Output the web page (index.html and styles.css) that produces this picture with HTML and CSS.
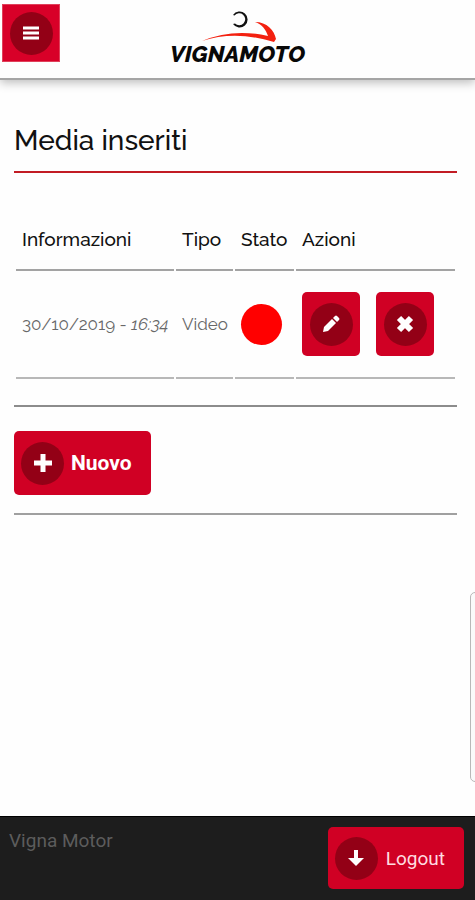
FILE: index.html
```html
<!DOCTYPE html>
<html lang="it">
<head>
<meta charset="utf-8">
<meta name="viewport" content="width=device-width, initial-scale=1">
<title>Media inseriti - Vignamoto</title>
<link rel="stylesheet" href="styles.css">
</head>
<body>
<header class="topbar">
  <button class="menu-button" type="button" aria-label="Menu">
    <span class="disc"><svg class="icon" viewBox="0 0 18 18"><path d="M1 4h16M1 9h16M1 14h16" stroke="#fff" stroke-width="3"/></svg></span>
  </button>
  <a class="logo" href="#">
    <svg class="logo-mark" viewBox="0 0 132 34" aria-hidden="true">
      <path d="M62 5A8 8 0 1 1 62 14L64 13.500A6 6 0 1 0 63.500 5.500Z" fill="#111"/>
      <path d="M31 31Q62 18 97 26C95 20 91 14 84 12C96 12 103 20 105 29L103 32Q64 20 31 31Z" fill="#f3200f"/>
    </svg>
    <span class="logo-text">VIGNAMOTO</span>
  </a>
</header>

<main class="content">
  <h1 class="title">Media inseriti</h1>
  <table class="media">
    <colgroup><col class="col-info"><col class="col-type"><col class="col-state"><col></colgroup>
    <thead>
      <tr><th scope="col">Informazioni</th><th scope="col">Tipo</th><th scope="col">Stato</th><th scope="col">Azioni</th></tr>
    </thead>
    <tbody>
      <tr>
        <td>30/10/2019 - <em>16:34</em></td>
        <td>Video</td>
        <td><span class="status" role="img" aria-label="Non attivo"></span></td>
        <td>
          <div class="actions">
            <button class="button button-icon" type="button" aria-label="Modifica">
              <span class="disc"><svg class="icon" viewBox="0 0 18 18"><path d="M1 17L2 12L10 4L14 8L6 16ZM11 3L13 1Q14 0 15 1L17 3Q18 4 17 5L15 7Z" fill="#fff"/></svg></span>
            </button>
            <button class="button button-icon" type="button" aria-label="Elimina">
              <span class="disc"><svg class="icon" viewBox="0 0 18 18"><path d="M3 3L15 15M15 3L3 15" stroke="#fff" stroke-width="6"/></svg></span>
            </button>
          </div>
        </td>
      </tr>
    </tbody>
  </table>
  <div class="toolbar">
    <button class="button button-new" type="button">
      <span class="disc"><svg class="icon" viewBox="0 0 18 18"><path d="M9 0V18M0 9H18" stroke="#fff" stroke-width="5"/></svg></span>
      Nuovo
    </button>
  </div>
</main>

<aside class="side-tab" aria-hidden="true"></aside>

<footer class="footer">
  <span class="brand">Vigna Motor</span>
  <button class="button button-logout" type="button">
    <span class="disc"><svg class="icon" viewBox="0 0 18 18"><path d="M7 1H11V9H17L9 17L1 9H7Z" fill="#fff"/></svg></span>
    Logout
  </button>
</footer>
</body>
</html>
```
FILE: styles.css
```css
* {
  box-sizing: border-box;
}

body {
  margin: 0;
  min-height: 100vh;
  display: flex;
  flex-direction: column;
  background: #fefefe;
  color: #111;
  font-family: Raleway, Lato, sans-serif;
  font-size: 17px;
}

button {
  border: 0;
  padding: 0;
  color: #fff;
  font-family: Roboto, sans-serif;
  cursor: pointer;
}

.topbar {
  display: grid;
  grid-template-columns: 1fr auto 1fr;
  align-items: start;
  height: 80px;
  border-bottom: 2px solid #a5a5a5;
  box-shadow: 0 3px 9px rgba(0, 0, 0, 0.25);
}

.menu-button {
  display: flex;
  align-items: center;
  justify-content: center;
  width: 58px;
  height: 58px;
  margin: 4px 0 0 2px;
  background: #d80028;
  border: 1px solid #e0405a;
}

.disc {
  display: flex;
  flex: none;
  align-items: center;
  justify-content: center;
  width: 43px;
  height: 43px;
  border-radius: 50%;
  background: #930016;
}

.icon {
  width: 18px;
  height: 18px;
}

.logo {
  display: flex;
  flex-direction: column;
  align-items: center;
  padding-top: 10px;
  color: #080808;
  text-decoration: none;
}

.logo-mark {
  width: 132px;
  height: 34px;
}

.logo-text {
  font: italic 800 23px/20px Raleway, sans-serif;
}

.content {
  flex: 1;
  padding: 41px 18px 40px 14px;
}

.title {
  margin: 0 0 52px;
  padding-bottom: 11px;
  border-bottom: 2px solid #c21c24;
  font-size: 28px;
  font-weight: 500;
  line-height: 39px;
}

.media {
  width: 100%;
  table-layout: fixed;
  border-collapse: separate;
  border-spacing: 2px 0;
}

.col-info {
  width: 158px;
}

.col-type {
  width: 57px;
}

.col-state {
  width: 59px;
}

.media th,
.media td {
  padding: 0 0 0 6px;
  border-bottom: 2px solid #a3a3a3;
  text-align: left;
  white-space: nowrap;
}

.media th {
  height: 46px;
  padding-bottom: 16px;
  font-size: 19px;
  font-weight: 500;
  line-height: 28px;
}

.media td {
  height: 108px;
  border-bottom-color: #b8b8b8;
  color: #686868;
  font-size: 17px;
}

.status {
  display: block;
  width: 41px;
  height: 41px;
  border-radius: 50%;
  background: #f00;
}

.actions {
  display: flex;
  gap: 16px;
}

.button {
  display: flex;
  align-items: center;
  height: 64px;
  border-radius: 5px;
  background: #d00024;
  font-size: 20px;
}

.button-icon {
  justify-content: center;
  width: 58px;
}

.button-new,
.button-logout {
  gap: 7px;
  padding: 0 19px 0 7px;
}

.button-new {
  font-size: 21px;
  font-weight: 700;
}

.button-logout {
  gap: 8px;
  height: 62px;
  color: #ffdce0;
  font-size: 19px;
}

.toolbar {
  margin-top: 26px;
  padding: 24px 0 18px;
  border-top: 2px solid #8c8c8c;
  border-bottom: 2px solid #a0a0a0;
}

.side-tab {
  position: fixed;
  right: -5px;
  bottom: 118px;
  width: 10px;
  height: 190px;
  border: 1px solid #b8b8b8;
  border-radius: 5px;
  background: #fafafa;
}

.footer {
  display: flex;
  align-items: flex-start;
  justify-content: space-between;
  padding: 10px 11px 11px 9px;
  background: #1d1d1d;
  border-top: 1px solid #000;
}

.brand {
  color: #5c5c5c;
  font: 19px/28px Roboto, sans-serif;
}
```
